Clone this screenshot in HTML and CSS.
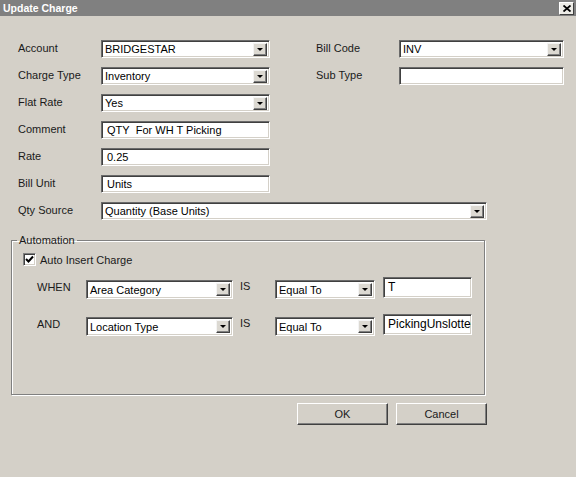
FILE: index.html
```html
<!DOCTYPE html>
<html lang="en">
<head>
  <meta charset="UTF-8" />
  <title>Update Charge</title>
  <link rel="stylesheet" href="styles.css">
</head>
<body>

<div class="dialog">
  <div class="titlebar">
    <span class="title">Update Charge</span>
    <span class="close">
      <svg width="8" height="7" viewBox="0 0 8 7"><path d="M0.5 0.5 L7.5 6.5 M7.5 0.5 L0.5 6.5" stroke="#000" stroke-width="1.8"/></svg>
    </span>
  </div>

  <div class="content">
    <div class="fields">
      <div class="row">
        <div class="pair">
          <label>Account</label>
          <div class="combo"><span class="val">BRIDGESTAR</span><span class="drop"></span></div>
        </div>
        <div class="pair right">
          <label>Bill Code</label>
          <div class="combo"><span class="val">INV</span><span class="drop"></span></div>
        </div>
      </div>
      <div class="row">
        <div class="pair">
          <label>Charge Type</label>
          <div class="combo"><span class="val">Inventory</span><span class="drop"></span></div>
        </div>
        <div class="pair right">
          <label>Sub Type</label>
          <div class="field"></div>
        </div>
      </div>
      <div class="row">
        <div class="pair">
          <label>Flat Rate</label>
          <div class="combo"><span class="val">Yes</span><span class="drop"></span></div>
        </div>
      </div>
      <div class="row">
        <div class="pair">
          <label>Comment</label>
          <div class="field">QTY&nbsp; For WH T Picking</div>
        </div>
      </div>
      <div class="row">
        <div class="pair">
          <label>Rate</label>
          <div class="field">0.25</div>
        </div>
      </div>
      <div class="row">
        <div class="pair">
          <label>Bill Unit</label>
          <div class="field">Units</div>
        </div>
      </div>
      <div class="row">
        <div class="pair">
          <label>Qty Source</label>
          <div class="combo wide"><span class="val">Quantity (Base Units)</span><span class="drop"></span></div>
        </div>
      </div>
    </div>

    <fieldset class="group">
      <legend>Automation</legend>
      <div class="auto">
        <div class="check-row">
          <span class="checkbox">
            <svg width="9" height="9" viewBox="0 0 9 9"><path d="M1 4 L3.5 6.5 L8 1.5" fill="none" stroke="#000" stroke-width="2"/></svg>
          </span>
          <span>Auto Insert Charge</span>
        </div>

        <div class="rule">
          <span class="op">WHEN</span>
          <div class="combo attr"><span class="val">Area Category</span><span class="drop"></span></div>
          <span class="is">IS</span>
          <div class="combo cmp"><span class="val">Equal To</span><span class="drop"></span></div>
          <div class="field value">T</div>
        </div>

        <div class="rule">
          <span class="op">AND</span>
          <div class="combo attr"><span class="val">Location Type</span><span class="drop"></span></div>
          <span class="is">IS</span>
          <div class="combo cmp"><span class="val">Equal To</span><span class="drop"></span></div>
          <div class="field value">PickingUnslotted</div>
        </div>
      </div>
    </fieldset>

    <div class="actions">
      <button class="btn">OK</button>
      <button class="btn">Cancel</button>
    </div>
  </div>
</div>

</body>
</html>
```

FILE: styles.css
```css
* {
  margin: 0;
  padding: 0;
  box-sizing: border-box;
}

body {
  font-family: 'Liberation Sans', Arial, sans-serif;
  font-size: 11px;
  color: #1a1a1a;
  background: #d4d0c8;
  width: 576px;
  height: 477px;
  overflow: hidden;
}

.dialog {
  height: 477px;
  background: #d4d0c8;
}

/* title bar */
.titlebar {
  height: 16px;
  background: #808080;
  display: flex;
  align-items: center;
  justify-content: space-between;
  padding: 0 2px 0 3px;
}

.title {
  color: #fff;
  font-weight: bold;
  font-size: 10.5px;
}

.close {
  width: 15px;
  height: 13px;
  background: #ecebe6;
  border: 1px solid;
  border-color: #fff #404040 #404040 #fff;
  display: flex;
  align-items: center;
  justify-content: center;
}

.content {
  padding: 24px 0 0 11px;
}

/* top fields */
.fields {
  padding-left: 7px;
  display: flex;
  flex-direction: column;
  gap: 9px;
}

.row {
  display: flex;
  height: 18px;
}

.pair {
  display: flex;
  align-items: center;
}

.pair label {
  width: 83px;
  margin-top: -3px;
}

.pair.right {
  margin-left: 46px;
}

.combo, .field {
  position: relative;
  height: 18px;
  width: 169px;
  background: #fff;
  border: 1px solid;
  border-color: #6a6a6a #fff #fff #6a6a6a;
  box-shadow: inset 1px 1px 0 #404040, inset -1px -1px 0 #d4d0c8;
  display: flex;
  align-items: center;
  white-space: pre;
  overflow: hidden;
  color: #000;
}

.combo {
  padding-left: 3px;
}

.field {
  padding-left: 5px;
}

.pair.right .combo, .pair.right .field {
  width: 165px;
}

.combo.wide {
  width: 386px;
}

.drop {
  position: absolute;
  right: 2px;
  top: 2px;
  width: 14px;
  height: 13px;
  background: #dcd9d2;
  border: 1px solid;
  border-color: #f4f4f4 #404040 #404040 #f4f4f4;
  box-shadow: inset -1px -1px 0 #808080;
}

.drop::after {
  content: "";
  position: absolute;
  left: 3px;
  top: 4px;
  border-left: 3px solid transparent;
  border-right: 3px solid transparent;
  border-top: 3px solid #000;
}

/* automation group */
.group {
  margin-top: 14px;
  width: 474px;
  height: 161px;
  border: 1px solid #808080;
  box-shadow: inset 1px 1px 0 #fff, 1px 1px 0 #fff;
  padding: 0 0 0 5px;
}

.group legend {
  padding: 0 2px;
  line-height: 13px;
}

.auto {
  padding-left: 6px;
}

.check-row {
  margin-top: 6px;
  display: flex;
  align-items: center;
  gap: 4px;
}

.checkbox {
  width: 13px;
  height: 13px;
  background: #fff;
  border: 1px solid;
  border-color: #808080 #fff #fff #808080;
  box-shadow: inset 1px 1px 0 #404040, inset -1px -1px 0 #d4d0c8;
  display: flex;
  align-items: center;
  justify-content: center;
}

.rule {
  display: flex;
  align-items: center;
  height: 20px;
  margin-top: 13px;
  padding-left: 14px;
}

.rule + .rule {
  margin-top: 17px;
}

.op {
  width: 49px;
  margin-top: -4px;
}

.combo.attr {
  width: 147px;
  height: 19px;
}

.is {
  width: 42px;
  padding-left: 7px;
  margin-top: -6px;
}

.combo.cmp {
  width: 100px;
  height: 19px;
}

.combo.cmp .val, .combo.attr .val {
  padding-top: 1px;
}

.field.value {
  width: 89px;
  height: 21px;
  margin-left: 8px;
  margin-top: -3px;
  padding-left: 4px;
  align-items: flex-start;
  padding-top: 2px;
  font-size: 12px;
}

/* buttons */
.actions {
  width: 476px;
  margin-top: 8px;
  display: flex;
  justify-content: flex-end;
  gap: 8px;
}

.btn {
  width: 91px;
  height: 22px;
  font-family: inherit;
  font-size: 11px;
  color: #1a1a1a;
  background: #d4d0c8;
  border: 1px solid;
  border-color: #fff #404040 #404040 #fff;
  box-shadow: inset -1px -1px 0 #808080;
}
```
